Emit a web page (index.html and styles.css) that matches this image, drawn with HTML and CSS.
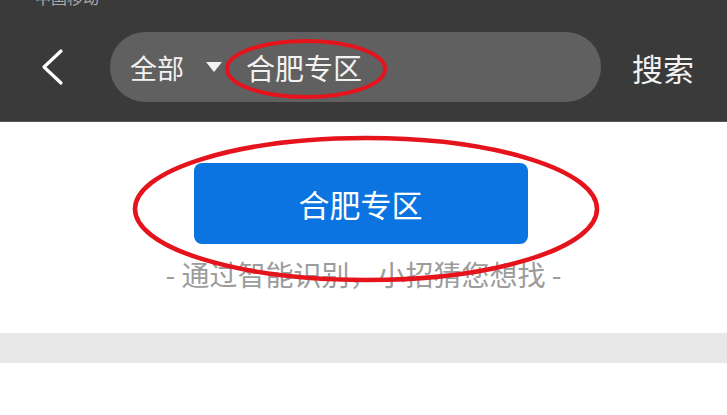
FILE: index.html
```html
<!DOCTYPE html>
<html lang="zh-CN">
<head>
    <meta charset="UTF-8" />
    <meta name="viewport" content="width=device-width, initial-scale=1" />
    <title>搜索</title>
    <link rel="stylesheet" href="styles.css">
</head>
<body>
<div class="page">
    <header class="header">
        <div class="status">中国移动</div>
        <div class="nav">
            <svg class="back" viewBox="0 0 24 38" aria-label="返回">
                <path d="M21 3 L4 19 L21 35" fill="none" stroke="#fff" stroke-width="3.2" stroke-linecap="round" stroke-linejoin="round"/>
            </svg>
            <div class="search-box">
                <span class="scope">全部</span>
                <span class="caret"></span>
                <span class="keyword">合肥专区</span>
            </div>
            <span class="search-btn">搜索</span>
        </div>
    </header>

    <section class="guess">
        <button class="zone-btn" type="button">合肥专区</button>
        <p class="hint">- 通过智能识别，小招猜您想找 -</p>
    </section>

    <div class="divider"></div>

    <!-- 红圈标注 -->
    <svg class="marks" viewBox="0 0 727 415" aria-hidden="true">
        <ellipse cx="306" cy="69" rx="79" ry="28" fill="none" stroke="#e5141c" stroke-width="4"/>
        <ellipse cx="366" cy="209" rx="231" ry="71" fill="none" stroke="#e5141c" stroke-width="4.5"/>
    </svg>
</div>
</body>
</html>
```

FILE: styles.css
```css
body {
    margin: 0;
    font-family: "Noto Sans CJK SC", "Noto Sans", sans-serif;
    background: #fff;
}
.page {
    position: relative;
    width: 727px;
    height: 415px;
    overflow: hidden;
}
.header {
    background: #3a3a3a;
    height: 121px;
    border-bottom: 1px solid #555;
    overflow: hidden;
}
.status {
    height: 14px;
    margin-top: -10px;
    padding-left: 35px;
    font-size: 16px;
    line-height: 14px;
    color: #aaa;
}
.nav {
    display: flex;
    align-items: center;
    height: 70px;
    margin-top: 28px;
}
.back {
    width: 24px;
    height: 38px;
    margin-left: 40px;
    margin-right: 46px;
}
.search-box {
    width: 491px;
    height: 70px;
    border-radius: 35px;
    background: #606060;
    display: flex;
    align-items: center;
    padding-left: 20px;
    box-sizing: border-box;
    color: #f2f2f2;
}
.scope {
    font-size: 27px;
}
.caret {
    width: 0;
    height: 0;
    border-left: 8px solid transparent;
    border-right: 8px solid transparent;
    border-top: 10px solid #f2f2f2;
    margin-left: 22px;
    margin-right: 24px;
}
.keyword {
    font-size: 29px;
}
.search-btn {
    margin-left: 31px;
    font-size: 31px;
    color: #f2f2f2;
}
.guess {
    display: flex;
    flex-direction: column;
    align-items: center;
    padding-top: 41px;
    height: 170px;
    box-sizing: border-box;
}
.zone-btn {
    flex: none;
    width: 334px;
    height: 81px;
    margin-right: 6px;
    border: none;
    border-radius: 8px;
    background: #0b74e0;
    color: #fff;
    font-family: "Noto Sans CJK SC", "Noto Sans", sans-serif;
    font-size: 31px;
    padding: 0;
}
.hint {
    margin: 12px 0 0;
    font-size: 28px;
    line-height: 36px;
    color: #9c9c9c;
}
.divider {
    height: 30px;
    margin-top: 41px;
    background: #e8e8e8;
}
.marks {
    position: absolute;
    top: 0;
    left: 0;
    width: 727px;
    height: 415px;
    pointer-events: none;
}
```
